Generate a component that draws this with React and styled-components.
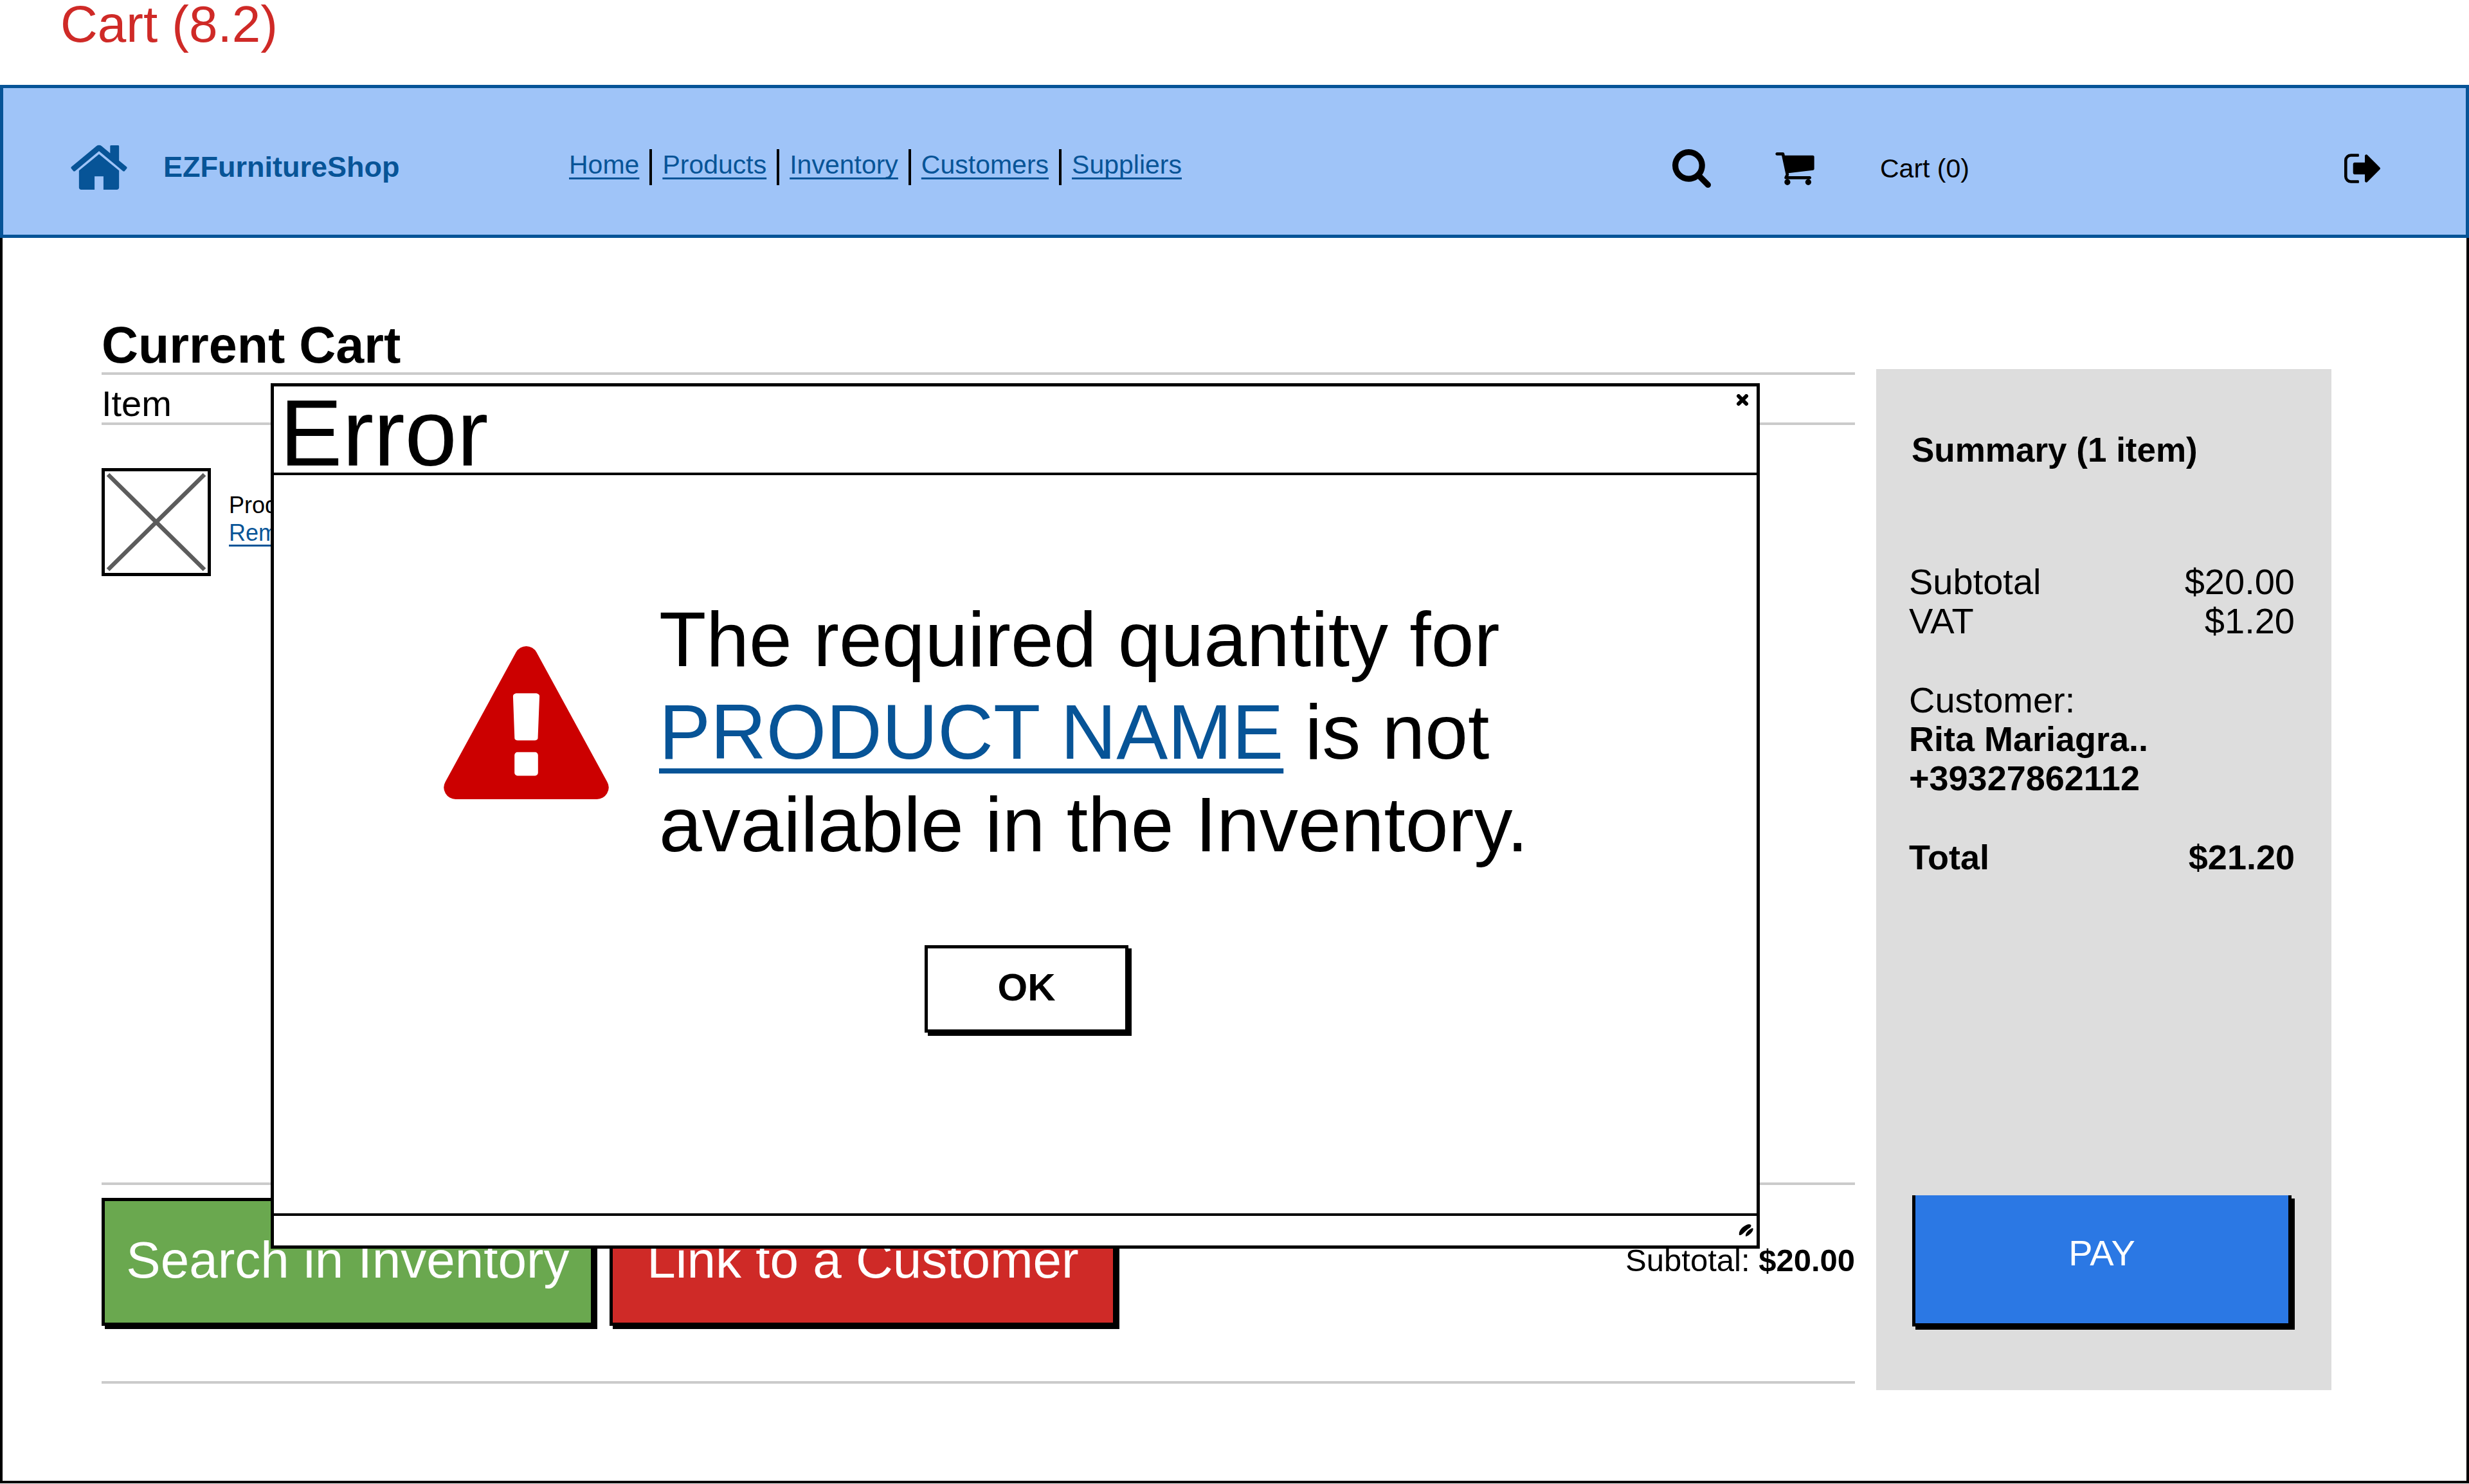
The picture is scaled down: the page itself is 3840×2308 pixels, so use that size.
import React from "react";
import styled, { createGlobalStyle } from "styled-components";

const BLUE = "#075497";
const RULE = "#cbcbcb";

const GlobalStyle = createGlobalStyle`
  *, *::before, *::after { box-sizing: border-box; }
  body {
    margin: 0;
    background: #fff;
    color: #000;
    font-family: "Liberation Sans", Arial, sans-serif;
  }
  h1, h2, p, ul { margin: 0; padding: 0; }
  ul { list-style: none; }
  svg { display: block; }
  button { font-family: inherit; color: inherit; padding: 0; cursor: pointer; }
`;

const Page = styled.div`
  min-height: 100vh;
  display: flex;
  flex-direction: column;
  padding-bottom: 1px;
`;

const PageTitle = styled.h1`
  height: 132px;
  padding-left: 94px;
  font-size: 80px;
  font-weight: 400;
  line-height: 76px;
  color: #cf2a27;
`;

const Header = styled.header`
  height: 238px;
  display: flex;
  align-items: center;
  padding: 18px 133px 0 104px;
  border: 5px solid ${BLUE};
  background: #9fc4f8;
`;

const Brand = styled.a`
  flex: 0 0 776px;
  display: flex;
  align-items: center;
  gap: 55px;
  color: ${BLUE};
  font-size: 45px;
  font-weight: 700;
  text-decoration: none;
`;

const NavList = styled.ul`
  display: flex;
`;

const NavItem = styled.li`
  display: flex;
  height: 56px;
  font-size: 41px;
  line-height: 48px;

  & + & {
    margin-left: 16px;
    padding-left: 16px;
    border-left: 4px solid #000;
  }
`;

const Link = styled.a`
  color: ${BLUE};
  text-decoration: underline;
  text-decoration-thickness: ${(p) => p.$line || 3}px;
  text-underline-offset: ${(p) => p.$offset || 6}px;
  text-decoration-skip-ink: none;
`;

const Tools = styled.div`
  margin-left: auto;
  padding-top: 4px;
  display: flex;
  align-items: center;
  gap: 100px;
`;

const IconButton = styled.button`
  border: 0;
  background: none;
`;

const CartCount = styled.span`
  width: 624px;
  padding-left: 2px;
  font-size: 41px;
`;

const Body = styled.div`
  position: relative;
  flex: 1;
  display: grid;
  grid-template-columns: 1fr 708px;
  column-gap: 33px;
  padding: 125px 210px 141px 154px;
  border: 4px solid #000;
  border-top: 0;
`;

const Cart = styled.main`
  display: flex;
  flex-direction: column;
  padding-bottom: 10px;
`;

const CartTitle = styled.h2`
  font-size: 79px;
  line-height: 84px;
  border-bottom: 4px solid ${RULE};
`;

const ColumnLabel = styled.div`
  padding-top: 16px;
  font-size: 56px;
  line-height: 58px;
  border-bottom: 4px solid ${RULE};
`;

const Items = styled.ul`
  flex: 1;
  padding-top: 67px;
`;

const Item = styled.li`
  display: flex;
  gap: 28px;
`;

const ItemText = styled.div`
  display: flex;
  flex-direction: column;
  padding-top: 36px;
  font-size: 36px;
  line-height: 43px;
`;

const CartFooter = styled.div`
  display: flex;
  align-items: center;
  gap: 24px;
  padding: 20px 0 86px;
  border-top: 4px solid ${RULE};
  border-bottom: 4px solid ${RULE};
`;

const SketchButton = styled.button`
  width: ${(p) => p.$width};
  height: ${(p) => p.$height || 199}px;
  padding-bottom: ${(p) => (p.$openTop ? 20 : 6)}px;
  border: 5px solid #000;
  ${(p) => p.$openTop && "border-top: 0;"}
  box-shadow: 5px 5px 0 #000;
  background: ${(p) => p.$fill || "#fff"};
  color: ${(p) => (p.$fill ? "#fff" : "#000")};
  font-size: ${(p) => p.$size}px;
  font-weight: ${(p) => (p.$bold ? 700 : 400)};
`;

const CartSubtotal = styled.p`
  margin-left: auto;
  padding-bottom: 6px;
  font-size: 49px;
`;

const Summary = styled.aside`
  margin-top: 79px;
  display: flex;
  flex-direction: column;
  padding: 95px 57px 99px 51px;
  background: #ddd;
`;

const SummaryTitle = styled.h2`
  padding-left: 4px;
  font-size: 53px;
  line-height: 61px;
  margin-bottom: 144px;
`;

const SummaryRow = styled.div`
  display: flex;
  justify-content: space-between;
  margin-top: ${(p) => (p.$spaced ? 62 : 0)}px;
  line-height: 61px;
  font-size: ${(p) => (p.$bold ? 54 : 56)}px;
  font-weight: ${(p) => (p.$bold ? 700 : 400)};
`;

const SummaryAction = styled.div`
  margin-top: auto;
  padding: 0 5px;
`;

const Dialog = styled.section`
  position: absolute;
  top: 226px;
  right: 1099px;
  bottom: 361px;
  left: 417px;
  display: flex;
  flex-direction: column;
  border: 5px solid #000;
  background: #fff;
`;

const DialogBar = styled.div`
  display: flex;
  justify-content: space-between;
  align-items: flex-start;
  padding: 12px 13px 0 9px;
  border-bottom: 4px solid #000;
`;

const DialogTitle = styled.h2`
  font-size: 146px;
  font-weight: 400;
  line-height: 122px;
`;

const CloseButton = styled(IconButton)`
  margin-top: 0;
`;

const DialogBody = styled.div`
  flex: 1;
  display: flex;
  flex-direction: column;
  align-items: center;
  gap: 116px;
  padding: 183px 229px 0 264px;
`;

const Alert = styled.div`
  align-self: stretch;
  display: flex;
  gap: 78px;
`;

const AlertIcon = styled.div`
  padding-top: 83px;
  color: #c00;
`;

const Message = styled.p`
  max-width: 1400px;
  font-size: 120px;
  line-height: 144px;
`;

const DialogFooter = styled.div`
  height: 50px;
  display: flex;
  justify-content: flex-end;
  align-items: center;
  padding-right: 4px;
  border-top: 4px solid #000;
`;

const ICONS = {
  home: {
    box: "0 0 1664 1792",
    d: "M1408 992v480q0 26-19 45t-45 19h-384v-384h-256v384h-384q-26 0-45-19t-19-45v-480q0-1 .5-3t.5-3l575-474 575 474q1 2 1 6zm223-69l-62 74q-8 9-21 11h-3q-13 0-21-7l-692-577-692 577q-12 8-24 7-13-2-21-11l-62-74q-8-10-7-23.5t11-21.5l719-599q32-26 76-26t76 26l244 204v-195q0-14 9-23t23-9h192q14 0 23 9t9 23v408l219 182q10 8 11 21.5t-7 23.5z",
  },
  search: {
    box: "0 128 1664 1664",
    d: "M1152 832q0-185-131.5-316.5t-316.5-131.5-316.5 131.5-131.5 316.5 131.5 316.5 316.5 131.5 316.5-131.5 131.5-316.5zm512 832q0 52-38 90t-90 38q-54 0-90-38l-343-342q-179 124-399 124-143 0-273.5-55.5t-225-150-150-225-55.5-273.5 55.5-273.5 150-225 225-150 273.5-55.5 273.5 55.5 225 150 150 225 55.5 273.5q0 220-124 399l343 343q37 37 37 90z",
  },
  cart: {
    box: "64 256 1664 1408",
    d: "M704 1536q0 52-38 90t-90 38-90-38-38-90 38-90 90-38 90 38 38 90zm896 0q0 52-38 90t-90 38-90-38-38-90 38-90 90-38 90 38 38 90zm128-1088v512q0 24-16.5 42.5t-40.5 21.5l-1044 122q13 60 13 70 0 16-24 64h920q26 0 45 19t19 45-19 45-45 19h-1024q-26 0-45-19t-19-45q0-11 8-31.5t16-36 21.5-40 15.5-29.5l-177-823h-204q-26 0-45-19t-19-45 19-45 45-19h256q16 0 28.5 6.5t19.5 15.5 13 24.5 8 26 5.5 29.5 4.5 26h1201q26 0 45 19t19 45z",
  },
  signOut: {
    box: "64 256 1568 1280",
    d: "M704 1440q0 4 1 20t.5 26.5-3 23.5-10 19.5-20.5 6.5h-320q-119 0-203.5-84.5t-84.5-203.5v-704q0-119 84.5-203.5t203.5-84.5h320q13 0 22.5 9.5t9.5 22.5q0 4 1 20t.5 26.5-3 23.5-10 19.5-20.5 6.5h-320q-66 0-113 47t-47 113v704q0 66 47 113t113 47h312l11.5 1 11.5 3 8 5.5 7 9 2 13.5zm928-544q0 26-19 45l-544 544q-19 19-45 19t-45-19-19-45v-288h-448q-26 0-45-19t-19-45v-384q0-26 19-45t45-19h448v-288q0-26 19-45t45-19 45 19l544 544q19 19 19 45z",
  },
  warning: {
    box: "0 0 1792 1664",
    d: "M1024 1375v-190q0-14-9.5-23.5t-22.5-9.5h-192q-13 0-22.5 9.5t-9.5 23.5v190q0 14 9.5 23.5t22.5 9.5h192q13 0 22.5-9.5t9.5-23.5zm-2-374l18-459q0-12-10-19-13-11-24-11h-220q-11 0-24 11-10 7-10 21l17 457q0 10 10 16.5t24 6.5h185q14 0 23.5-6.5t10.5-16.5zm-14-934l768 1408q35 63-2 126-17 29-46.5 46t-63.5 17h-1536q-34 0-63.5-17t-46.5-46q-37-63-2-126l768-1408q17-31 47-49t65-18 65 18 47 49z",
  },
};

function Icon({ name, width, height }) {
  const { box, d } = ICONS[name];
  return (
    <svg viewBox={box} width={width} height={height} fill="currentColor" aria-hidden="true">
      <path d={d} />
    </svg>
  );
}

function Placeholder() {
  return (
    <svg width="170" height="168" viewBox="0 0 170 168" fill="none" aria-hidden="true">
      <path d="M10 10L160 158M160 10L10 158" stroke="#5c5c5c" strokeWidth="6.5" />
      <rect x="2.5" y="2.5" width="165" height="163" stroke="#000" strokeWidth="5" />
    </svg>
  );
}

const NAV = ["Home", "Products", "Inventory", "Customers", "Suppliers"];

const SUMMARY = [
  { label: "Subtotal", value: "$20.00" },
  { label: "VAT", value: "$1.20" },
  { label: "Customer:", spaced: true },
  { label: "Rita Mariagra..", bold: true },
  { label: "+39327862112", bold: true },
  { label: "Total", value: "$21.20", bold: true, spaced: true },
];

export default function App() {
  return (
    <Page>
      <GlobalStyle />
      <PageTitle>Cart (8.2)</PageTitle>
      <Header>
        <Brand href="#home">
          <Icon name="home" width={90} height={97} />
          EZFurnitureShop
        </Brand>
        <nav>
          <NavList>
            {NAV.map((label) => (
              <NavItem key={label}>
                <Link href={`#${label.toLowerCase()}`}>{label}</Link>
              </NavItem>
            ))}
          </NavList>
        </nav>
        <Tools>
          <IconButton aria-label="Search">
            <Icon name="search" width={60} height={60} />
          </IconButton>
          <IconButton aria-label="Cart">
            <Icon name="cart" width={61} height={51} />
          </IconButton>
          <CartCount>Cart (0)</CartCount>
          <IconButton aria-label="Sign out">
            <Icon name="signOut" width={56} height={46} />
          </IconButton>
        </Tools>
      </Header>

      <Body>
        <Cart>
          <CartTitle>Current Cart</CartTitle>
          <ColumnLabel>Item</ColumnLabel>
          <Items>
            <Item>
              <Placeholder />
              <ItemText>
                <span>Product</span>
                <Link href="#remove">Remove</Link>
              </ItemText>
            </Item>
          </Items>
          <CartFooter>
            <SketchButton $width="766px" $size={80} $fill="#6aa84f">
              Search in Inventory
            </SketchButton>
            <SketchButton $width="788px" $size={80} $fill="#cf2a27">
              Link to a Customer
            </SketchButton>
            <CartSubtotal>
              Subtotal: <strong>$20.00</strong>
            </CartSubtotal>
          </CartFooter>
        </Cart>

        <Summary>
          <SummaryTitle>Summary (1 item)</SummaryTitle>
          {SUMMARY.map(({ label, value, bold, spaced }) => (
            <SummaryRow key={label} $bold={bold} $spaced={spaced}>
              <span>{label}</span>
              {value && <span>{value}</span>}
            </SummaryRow>
          ))}
          <SummaryAction>
            <SketchButton $width="100%" $height={204} $size={56} $fill="#2b78e4" $openTop>
              PAY
            </SketchButton>
          </SummaryAction>
        </Summary>

        <Dialog role="dialog" aria-labelledby="dialog-title">
          <DialogBar>
            <DialogTitle id="dialog-title">Error</DialogTitle>
            <CloseButton aria-label="Close">
              <svg width="18" height="18" viewBox="0 0 18 18" aria-hidden="true">
                <path d="M3 3L15 15M15 3L3 15" stroke="#000" strokeWidth="6" strokeLinecap="round" />
              </svg>
            </CloseButton>
          </DialogBar>
          <DialogBody>
            <Alert>
              <AlertIcon>
                <Icon name="warning" width={257} height={238} />
              </AlertIcon>
              <Message>
                The required quantity for{" "}
                <Link href="#product" $line={8} $offset={15}>
                  PRODUCT NAME
                </Link>{" "}
                is not available in the Inventory.
              </Message>
            </Alert>
            <SketchButton $width="317px" $height={136} $size={60} $bold>
              OK
            </SketchButton>
          </DialogBody>
          <DialogFooter>
            <svg width="24" height="22" viewBox="0 0 24 22" aria-hidden="true">
              <path
                d="M1 18C-1 10 9 2 16 1C21 1 20 5 17 7C11 10 6 19 1 18ZM11 20C10 14 17 8 22 7C25 10 17 19 11 20Z"
                fill="#000"
              />
            </svg>
          </DialogFooter>
        </Dialog>
      </Body>
    </Page>
  );
}
